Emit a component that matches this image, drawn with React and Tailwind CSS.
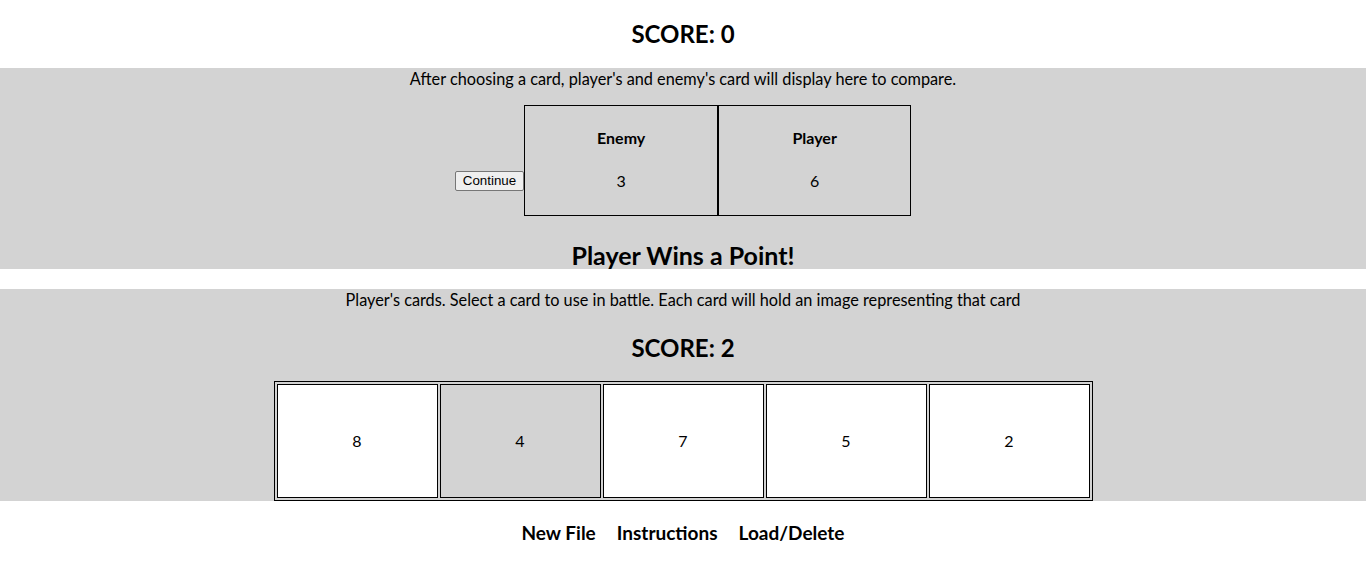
const handCards = [
    { id: 1, value: 8, selected: false },
    { id: 2, value: 4, selected: true },
    { id: 3, value: 7, selected: false },
    { id: 4, value: 5, selected: false },
    { id: 5, value: 2, selected: false },
];

const App = () => {
    return (
        <div className="min-h-[582px] bg-white text-black font-['Lato',sans-serif]">
            {/* Enemy score */}
            <div className="h-[68px] flex items-center justify-center">
                <h2 className="text-[24px] font-bold leading-none">SCORE: 0</h2>
            </div>

            {/* Battle area */}
            <div className="bg-[#d3d3d3] h-[201px] flex flex-col items-center">
                <p className="text-[16.3px] leading-[22px]">After choosing a card, player's and enemy's card will display here to compare.</p>
                <div className="flex items-start mt-[15px]">
                    <button className="mt-[66px] h-[20px] px-[7px] bg-[#efefef] border border-[#767676] rounded-[2px] text-[13.33px] leading-none font-['Liberation_Sans',Arial,sans-serif]">
                        Continue
                    </button>
                    <div className="flex">
                        <div className="w-[194px] h-[111px] border border-black flex flex-col items-center">
                            <span className="mt-[21px] font-bold text-[16px] leading-[22px]">Enemy</span>
                            <span className="mt-[21px] text-[16px] leading-[22px]">3</span>
                        </div>
                        <div className="w-[193px] h-[111px] border border-black flex flex-col items-center">
                            <span className="mt-[21px] font-bold text-[16px] leading-[22px]">Player</span>
                            <span className="mt-[21px] text-[16px] leading-[22px]">6</span>
                        </div>
                    </div>
                </div>
                <h2 className="mt-[25px] text-[25px] font-bold leading-[28px]">Player Wins a Point!</h2>
            </div>

            <div className="h-[20px]" />

            {/* Player hand */}
            <div className="bg-[#d3d3d3] h-[212px] flex flex-col items-center">
                <p className="text-[16.3px] leading-[22px]">Player's cards. Select a card to use in battle. Each card will hold an image representing that card</p>
                <h2 className="mt-[23px] text-[24px] font-bold leading-[28px]">SCORE: 2</h2>
                <div className="mt-[19px] border border-black p-[2px] flex gap-[2px]">
                    {handCards.map((card) => (
                        <div
                            key={card.id}
                            className={`w-[161px] h-[114px] border border-black flex items-center justify-center text-[16px] ${card.selected ? 'bg-[#d3d3d3]' : 'bg-white'}`}
                        >
                            {card.value}
                        </div>
                    ))}
                </div>
            </div>

            {/* Menu */}
            <div className="flex justify-center gap-[21px] mt-[20px] text-[19px] font-bold leading-[24px]">
                <span>New File</span>
                <span>Instructions</span>
                <span>Load/Delete</span>
            </div>
        </div>
    );
};

export default App;
